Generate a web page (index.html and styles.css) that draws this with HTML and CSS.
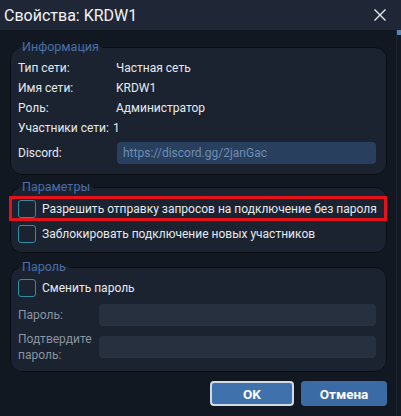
FILE: index.html
```html
<!DOCTYPE html>
<html lang="ru">
<head>
<meta charset="utf-8">
<link rel="stylesheet" href="styles.css">
</head>
<body>
<div class="window">
  <div class="titlebar">
    <span class="title">Свойства: KRDW1</span>
    <svg class="close" width="14" height="14" viewBox="0 0 14 14"><path d="M1.5 1.5 L12.5 12.5 M12.5 1.5 L1.5 12.5" stroke="#e6e9ee" stroke-width="1.4" fill="none"/></svg>
  </div>
  <div class="main">
    <div class="content">
      <fieldset class="group info">
        <legend>Информация</legend>
        <div class="row"><span class="lbl">Тип сети:</span><span class="val">Частная сеть</span></div>
        <div class="row"><span class="lbl">Имя сети:</span><span class="val">KRDW1</span></div>
        <div class="row"><span class="lbl">Роль:</span><span class="val">Администратор</span></div>
        <div class="row"><span class="lbl auto">Участники сети:</span><span class="val short">1</span></div>
        <div class="row discord"><span class="lbl">Discord:</span><div class="input link">https://discord.gg/2janGac</div></div>
      </fieldset>
      <fieldset class="group params">
        <legend>Параметры</legend>
        <div class="check highlighted"><span class="box"></span><span class="ctext">Разрешить отправку запросов на подключение без пароля</span></div>
        <div class="check"><span class="box"></span><span class="ctext">Заблокировать подключение новых участников</span></div>
      </fieldset>
      <fieldset class="group password">
        <legend>Пароль</legend>
        <div class="check first"><span class="box"></span><span class="ctext">Сменить пароль</span></div>
        <div class="prow"><span class="plbl">Пароль:</span><div class="input empty"></div></div>
        <div class="prow two"><span class="plbl">Подтвердите<br>пароль:</span><div class="input empty"></div></div>
      </fieldset>
      <div class="buttons">
        <button class="btn ok">OK</button>
        <button class="btn">Отмена</button>
      </div>
    </div>
    <div class="edge"><span class="edge-mark"></span></div>
  </div>
</div>
</body>
</html>
```
FILE: styles.css
```css
* { box-sizing: border-box; }
html, body { margin: 0; padding: 0; }
body {
  width: 401px;
  height: 416px;
  overflow: hidden;
  background: #121821;
  font-family: Roboto, "Noto Sans", sans-serif;
  font-size: 12px;
  color: #e6eaef;
}
.window { width: 401px; height: 416px; display: flex; flex-direction: column; }
.titlebar {
  height: 30px;
  flex: none;
  background: #1f2635;
  display: flex;
  align-items: center;
  justify-content: space-between;
  padding: 0 14px 0 4px;
}
.title { font-size: 16px; color: #f2f4f7; }
.close { display: block; }
.main { flex: 1; display: flex; min-height: 0; }
.content { flex: 1; min-width: 0; padding: 10px 9px 0 10px; }
.edge {
  width: 5px;
  flex: none;
  border-left: 1px solid #1d2532;
  background: #131a24;
}
.edge-mark { display: block; width: 4px; height: 5px; background: #4f86b8; }

.group {
  margin: 0;
  border: 1px solid #0a0e14;
  border-radius: 12px;
  background: #1b2330;
  padding: 0 9px 0 7px;
  min-width: 0;
}
.group legend {
  margin-left: 1px;
  padding: 0 3px;
  font-size: 12.5px;
  line-height: 14px;
  color: #4a6ea6;
}
.info { padding-top: 4px; padding-bottom: 10px; }
.params { margin-top: 5px; padding-top: 2px; padding-bottom: 6px; }
.password { margin-top: 7px; padding-top: 2px; padding-bottom: 13px; }

.row { display: flex; align-items: center; height: 20px; white-space: nowrap; }
.lbl { width: 98px; flex: none; }
.lbl.auto { width: auto; margin-right: 4px; }
.row.discord { height: 22px; margin-top: 4px; }
.input {
  flex: 1;
  min-width: 0;
  height: 22px;
  border-radius: 4px;
  background: #27303e;
}
.input.link {
  background: #283f5d;
  color: #6e8db3;
  padding: 0 6px;
  line-height: 22px;
  margin-left: 1px;
  margin-right: 1px;
}
.check { position: relative; display: flex; align-items: center; height: 25px; gap: 6px; white-space: nowrap; }
.check.first { height: 24px; }
.box {
  width: 18px; height: 18px; flex: none;
  border: 1px solid #2e8ea6;
  border-radius: 3px;
  background: #1b2330;
}
.check.highlighted::after {
  content: "";
  position: absolute;
  left: -9px; right: -10px; top: 0; bottom: 0;
  border: 3px solid #e3131b;
}
.prow { display: flex; align-items: center; height: 22px; margin-top: 4px; }
.prow.two { margin-top: 10px; }
.plbl { width: 81px; flex: none; color: #8a93a1; line-height: 16px; }
.input.empty { margin-right: 1px; }

.buttons { display: flex; justify-content: flex-end; gap: 7px; margin-top: 9px; }
.btn {
  height: 25px;
  border: none;
  border-radius: 4px;
  background: #3b6ba5;
  color: #ffffff;
  font-family: Roboto, sans-serif;
  font-weight: bold;
  font-size: 13.5px;
  width: 86px;
  padding: 0;
}
.btn.ok { width: 84px; border: 2px solid #d2dae3; background: #3f71ad; }
```
